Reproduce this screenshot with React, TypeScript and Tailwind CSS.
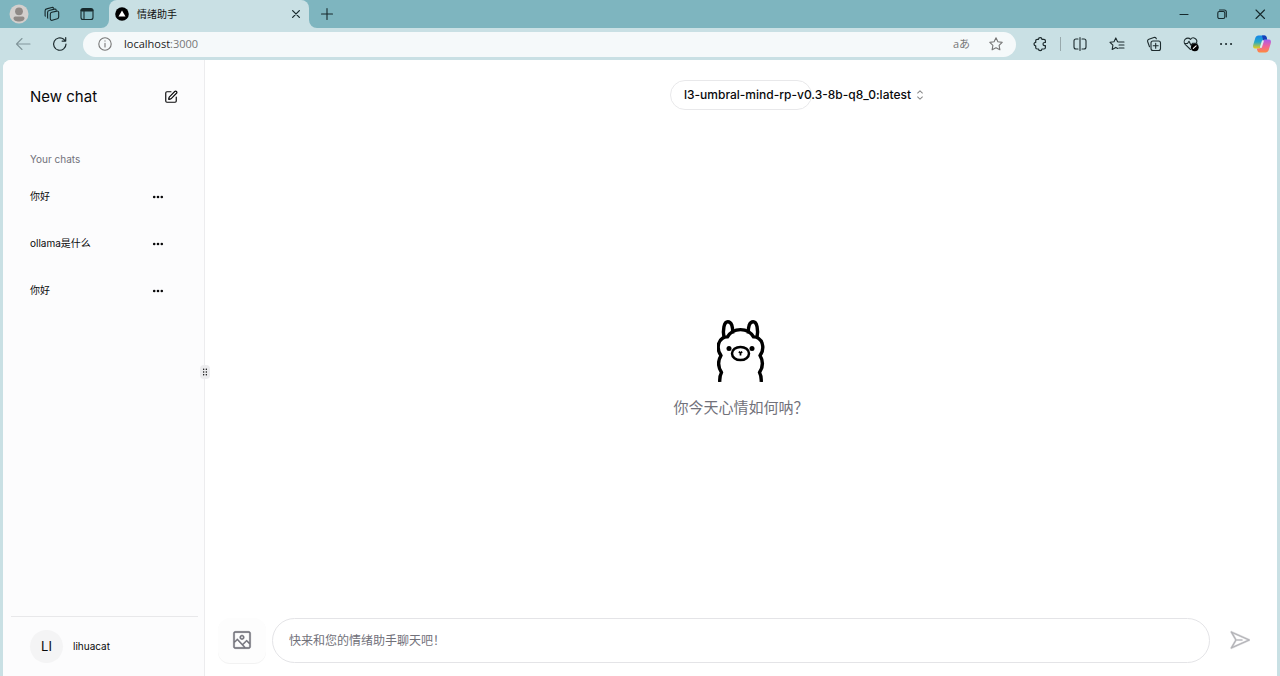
import React from 'react';
import { SquarePen } from 'lucide-react';
import { RxImage, RxPaperPlane, RxCaretSort, RxDragHandleDots2 } from 'react-icons/rx';

function Icon({ children, className }: { children: React.ReactNode; className: string }) {
  return (
    <svg viewBox="0 0 16 16" fill="none" stroke="currentColor" strokeWidth="1.1" strokeLinecap="round" strokeLinejoin="round" className={className} aria-hidden="true">
      {children}
    </svg>
  );
}

function BarButton({ label, className, children }: { label: string; className: string; children: React.ReactNode }) {
  return (
    <button type="button" aria-label={label} className={`flex h-7 shrink-0 items-center justify-center ${className}`}>
      {children}
    </button>
  );
}

function TitleBar() {
  return (
    <header className="flex h-7 shrink-0 items-center bg-[#7eb5bf] pr-px text-[#17292c]">
      <BarButton label="Profile" className="w-9 pl-0.5">
        <svg viewBox="0 0 20 20" className="size-5" aria-hidden="true">
          <circle cx="10" cy="10" r="9.5" fill="#d3cfcd" />
          <circle cx="10" cy="7.3" r="3.9" fill="#8f8986" />
          <path d="M4.5 14.2q0-1.700 1.700-1.700h7.600q1.700 0 1.700 1.700c0 2-2.500 3.300-5.500 3.300s-5.500-1.300-5.500-3.300z" fill="#8f8986" />
        </svg>
      </BarButton>
      <BarButton label="Workspaces" className="w-8">
        <Icon className="size-4">
          <path d="M7.800 6.300l5-1.200c1-.2 1.900.4 1.900 1.500v4.300c0 .9-.5 1.600-1.400 1.900l-5 1.500c-1.100.3-2-.4-2-1.500V8.200c0-1 .6-1.700 1.500-1.900z" />
          <path d="M3.800 12.200l-.2-.6V6.400c0-1 .6-1.700 1.500-1.900l5.300-1.400c.9-.2 1.600.2 1.800 1" />
          <path d="M1.300 10.200l-.2-.6V4.800c0-1 .6-1.700 1.500-1.900l5.200-1.400c.9-.2 1.600.2 1.800.8" />
        </Icon>
      </BarButton>
      <BarButton label="Tab actions" className="w-[38px]">
        <Icon className="size-4">
          <rect x="2" y="2.500" width="12" height="11" rx="2" />
          <path d="M3 4.200h10" strokeWidth="2.600" />
          <path d="M5 5.500v8" />
        </Icon>
      </BarButton>
      <div className="relative ml-[3px] flex h-7 w-[200px] items-center rounded-t-lg bg-[#c9e0e4] pl-1.5 pr-[5px]">
        <svg viewBox="0 0 8 8" className="absolute -left-2 bottom-0 size-2" aria-hidden="true"><path d="M8 0v8H0a8 8 0 0 0 8-8z" fill="#c9e0e4" /></svg>
        <svg viewBox="0 0 8 8" className="absolute -right-2 bottom-0 size-2" aria-hidden="true"><path d="M0 0v8h8a8 8 0 0 1-8-8z" fill="#c9e0e4" /></svg>
        <svg viewBox="0 0 14 14" className="size-3.5 shrink-0" aria-hidden="true"><circle cx="7" cy="7" r="6.800" fill="#000" /><path d="M7 3.600l3.500 5.900h-7z" fill="#fff" /></svg>
        <span className="ml-2 flex-1 text-[10px] text-[#111]">情绪助手</span>
        <button type="button" aria-label="Close tab" className="flex size-4 items-center justify-center">
          <Icon className="size-3"><path d="M3.500 3.500l9 9M12.500 3.500l-9 9" strokeWidth="1.700" /></Icon>
        </button>
      </div>
      <BarButton label="New tab" className="w-9"><Icon className="size-4"><path d="M8 2.500v11M2.500 8h11" /></Icon></BarButton>
      <div className="flex-1" />
      <BarButton label="Minimize" className="w-[38px]"><Icon className="size-4"><path d="M4 8.500h8" /></Icon></BarButton>
      <BarButton label="Restore" className="w-[38px]">
        <Icon className="size-4"><rect x="3.800" y="5.500" width="7" height="7" rx="1.500" /><path d="M5.500 4h4.800c1.200 0 2 .8 2 2v5" /></Icon>
      </BarButton>
      <BarButton label="Close window" className="w-[38px]"><Icon className="size-4"><path d="M4 4l8.500 8.500M12.500 4L4 12.500" /></Icon></BarButton>
    </header>
  );
}

const star = 'M8 1.800l1.900 4 4.300.6-3.100 3 .8 4.400L8 11.700l-3.900 2.100.8-4.400-3.100-3 4.300-.6z';

function Toolbar() {
  return (
    <nav aria-label="Browser toolbar" className="flex h-8 shrink-0 items-center bg-[#c9e0e4] text-[#1d2b2e]">
      <BarButton label="Back" className="w-[42px] pl-1 text-[#81969b]"><Icon className="size-4"><path d="M1.500 8H15M7 2.500L1.500 8 7 13.500" /></Icon></BarButton>
      <BarButton label="Reload" className="w-9"><Icon className="size-4"><path d="M14 8a6.200 6.200 0 1 1-2.200-4.700l1.400 1.400M13.700 1.500v3.600h-3.600" strokeWidth="1.200" /></Icon></BarButton>
      <div className="ml-[5px] flex h-[25px] flex-1 items-center rounded-full bg-[#f5f9fa] pl-3.5 pr-3">
        <Icon className="size-4 text-[#777]"><circle cx="8" cy="8" r="6.200" /><path d="M8 7.300v3.700M8 4.900v.2" /></Icon>
        <span className="ml-[11px] flex-1 font-['Open_Sans',sans-serif] text-[11px] text-[#1b1b1b]">localhost<span className="text-[#777]">:3000</span></span>
        <button type="button" aria-label="Translate" className="mr-[18px] font-['Open_Sans','Noto_Sans_CJK_JP',sans-serif] text-[11px] leading-4 text-[#777]">aあ</button>
        <button type="button" aria-label="Add to favorites" className="text-[#777]"><Icon className="size-4"><path d={star} /></Icon></button>
      </div>
      <BarButton label="Extensions" className="ml-2 w-8">
        <Icon className="size-4"><path d="M5.200 3.300h1.300a1.700 1.700 0 0 1 3.400 0h2a1.500 1.500 0 0 1 1.500 1.500v1.700h-.8a1.600 1.600 0 0 0 0 3.200h.8v1.800a1.500 1.500 0 0 1-1.500 1.500h-2a1.700 1.700 0 0 1-3.400 0H5.200a1.500 1.500 0 0 1-1.500-1.500V9.800a1.700 1.700 0 0 1 0-3.400V4.800a1.500 1.500 0 0 1 1.500-1.500z" strokeWidth="1.200" /></Icon>
      </BarButton>
      <div className="ml-1 h-3.5 w-px bg-[#98a9ac]" />
      <BarButton label="Split screen" className="w-[38px]">
        <Icon className="size-4"><path d="M6 3H4a2 2 0 0 0-2 2v6a2 2 0 0 0 2 2h2M10 3h2a2 2 0 0 1 2 2v6a2 2 0 0 1-2 2h-2M8 1.500v13" /></Icon>
      </BarButton>
      <BarButton label="Favorites" className="w-9">
        <Icon className="size-4"><path d="M8.800 12.500l-2-1.100-3.600 2 .7-4.200L1 6.300l4-.6 1.800-3.800L8.600 5.700l1.300.3H15M10 9h5M10 12h5" /></Icon>
      </BarButton>
      <BarButton label="Collections" className="w-[37px]">
        <Icon className="size-4"><rect x="5" y="5" width="9.500" height="9.500" rx="2" /><path d="M9.700 7.300v5M7.200 9.800h5M3.500 10.800l-1.800-5A2 2 0 0 1 2.900 3.200l5-1.700a2 2 0 0 1 2.500 1.300" /></Icon>
      </BarButton>
      <BarButton label="Browser essentials" className="w-9 pl-px">
        <Icon className="size-4">
          <path d="M7.500 13.500L2.200 8.300a3.500 3.500 0 0 1 5.300-5 3.500 3.500 0 0 1 6 3.500M2 7.500h2.500L6 5.300l2 4 1.500-2H14" />
          <circle cx="11.800" cy="11.300" r="3.900" fill="#000" stroke="none" /><path d="M10.300 12.300l2.800-2.500" stroke="#fff" />
        </Icon>
      </BarButton>
      <BarButton label="Settings and more" className="w-9">
        <Icon className="size-4"><path d="M3 8h.1M8 8h.1M13 8h.1" strokeWidth="2" /></Icon>
      </BarButton>
      <BarButton label="Copilot" className="w-9">
        <svg viewBox="0 0 20 20" className="size-5" aria-hidden="true">
          <defs>
            <linearGradient id="cool" x1="0" y1="0" x2="0" y2="1"><stop offset="0" stopColor="#1685e8" /><stop offset=".5" stopColor="#25a9c8" /><stop offset="1" stopColor="#f2cd13" /></linearGradient>
            <linearGradient id="warm" x1="0" y1="0" x2="0" y2="1"><stop offset="0" stopColor="#a45cee" /><stop offset=".5" stopColor="#f0629b" /><stop offset="1" stopColor="#ff8a3d" /></linearGradient>
          </defs>
          <path d="M6.500 1.500h6c1.500 0 1.900 1 2.300 2.500l.4 1.500h-2c-1.400 0-2 .8-2.400 2L9 12.500c-.5 1.500-1.300 2-2.500 2H3.200C1 14.500.7 12.500 1.300 10.500l2-6.500c.5-1.600 1.500-2.500 3.200-2.500z" fill="url(#cool)" />
          <path d="M13.500 18.500h-6c-1.500 0-1.900-1-2.300-2.500l-.4-1.500h2c1.400 0 2-.8 2.400-2L11 7.500c.5-1.500 1.300-2 2.500-2h3.300c2.200 0 2.500 2 1.900 4l-2 6.500c-.5 1.600-1.500 2.500-3.200 2.500z" fill="url(#warm)" />
          <path d="M12.500 1.500c1.500 0 1.900 1 2.300 2.500l.4 1.500h-2c-1 0-1.600.4-2 1L10 1.500z" fill="#173fb8" />
          <path d="M10.800 7.200l-1.800 5.800" stroke="#dcebee" strokeWidth="2" strokeLinecap="round" />
        </svg>
      </BarButton>
    </nav>
  );
}

const chats = ['你好', 'ollama是什么', '你好'];

function Sidebar() {
  return (
    <aside className="flex w-[201px] shrink-0 flex-col bg-[#fcfcfd]">
      <div className="flex items-center justify-between pl-[27px] pr-[26px] pt-[25px]">
        <h1 className="text-[15px] leading-6">New chat</h1>
        <button type="button" aria-label="New chat"><SquarePen className="size-3.5" /></button>
      </div>
      <h2 className="mt-10 pl-[27px] text-[10px] leading-5 text-[#71717a]">Your chats</h2>
      <ul className="mt-1">
        {chats.map((chat, i) => (
          <li key={i} className="flex h-[47px] items-center justify-between pl-[27px] pr-[38px] text-[10px]">
            <a href="#chat">{chat}</a>
            <button type="button" aria-label="Chat options">
              <svg viewBox="0 0 16 16" className="size-4" fill="currentColor" aria-hidden="true"><circle cx="4.200" cy="8" r="1.300" /><circle cx="8" cy="8" r="1.300" /><circle cx="11.800" cy="8" r="1.300" /></svg>
            </button>
          </li>
        ))}
      </ul>
      <div className="ml-2 mr-1.5 mt-auto flex h-[60px] items-center gap-2.5 border-t border-[#e8e8ea] pl-[19px]">
        <span className="flex size-[33px] items-center justify-center rounded-full bg-[#f4f4f5] text-[13px]">LI</span>
        <span className="text-[10px]">lihuacat</span>
      </div>
    </aside>
  );
}

function Llama() {
  return (
    <svg viewBox="0 0 48 62" className="h-[62px] w-12" fill="none" stroke="#000" strokeWidth="3.400" strokeLinejoin="round" aria-label="Ollama" role="img">
      <path d="M2.800 62c-.3-4 .3-7 1.700-9.500C1 47 1 40.500 4 35.500-.3 30 .5 21.500 5.500 18.300c1.500-1 3.200-1.500 5-1.400C13.500 11.700 18 9.600 23.500 9.600s10 2.100 13 7.300c1.800-.1 3.500.4 5 1.400 5 3.200 5.800 11.700 1.500 17.200 3 5 3 11.500-.5 17 1.400 2.500 2 5.500 1.700 9.500" />
      <path d="M7 17.500C5.500 10 7 1.800 10.800 1.800S16 7 15.700 13.500M40 17.500C41.500 10 40 1.800 36.200 1.800S31 7 31.300 13.500" />
      <ellipse cx="23.500" cy="33.500" rx="8.500" ry="6.600" strokeWidth="2.500" />
      <circle cx="12" cy="28.600" r="2.500" fill="#000" stroke="none" />
      <circle cx="35" cy="28.600" r="2.500" fill="#000" stroke="none" />
      <path d="M21.800 31.800l1.700 1.200 1.700-1.200M23.500 33v2.600" strokeWidth="1.700" />
    </svg>
  );
}

function Chat() {
  return (
    <main className="flex min-w-0 flex-1 flex-col">
      <div className="flex justify-center pt-5">
        <button type="button" className="flex h-[30px] w-[142px] items-center gap-px whitespace-nowrap rounded-full border border-[#e8e8ea] pl-[13px] text-xs font-medium">
          <span>l3-umbral-mind-rp-v0.3-8b-q8_0:latest</span>
          <RxCaretSort className="size-4 shrink-0 opacity-50" />
        </button>
      </div>
      <div className="flex flex-1 flex-col items-center justify-center gap-3.5 pt-3">
        <Llama />
        <p className="text-[15px] leading-6 text-[#71717a]">你今天心情如何呐？</p>
      </div>
      <form className="flex items-center gap-1.5 px-[13px] pb-[13px]" onSubmit={(e) => e.preventDefault()}>
        <button type="button" aria-label="Attach image" className="flex h-[45px] w-12 shrink-0 items-center justify-center rounded-xl bg-[#fdfdfd] pb-0.5 text-[#71717a] shadow-2xs"><RxImage className="size-5" stroke="currentColor" strokeWidth="0.3" /></button>
        <input aria-label="Message" placeholder="快来和您的情绪助手聊天吧！" className="h-[45px] min-w-0 flex-1 rounded-full border border-[#e4e4e7] bg-white px-4 text-xs outline-none placeholder:text-[#71717a]" />
        <button type="submit" aria-label="Send message" className="flex h-[45px] w-12 shrink-0 items-center justify-center rounded-xl pb-0.5 text-[#b4b4b8]"><RxPaperPlane className="size-5" stroke="currentColor" strokeWidth="0.3" /></button>
      </form>
    </main>
  );
}

export default function App() {
  return (
    <div className="flex h-screen flex-col bg-[#c9e0e4] font-['Inter','Noto_Sans_CJK_SC',sans-serif] text-[#09090b]">
      <TitleBar />
      <Toolbar />
      <div className="mx-[3px] flex min-h-0 flex-1 overflow-hidden rounded-t-lg bg-white">
        <Sidebar />
        <div role="separator" aria-orientation="vertical" className="relative flex w-px shrink-0 items-center justify-center bg-[#ececee] pt-2">
          <span className="z-10 flex h-3.5 w-2.5 shrink-0 items-center justify-center rounded-sm bg-[#ececee]"><RxDragHandleDots2 className="size-2.5 shrink-0" /></span>
        </div>
        <Chat />
      </div>
    </div>
  );
}
